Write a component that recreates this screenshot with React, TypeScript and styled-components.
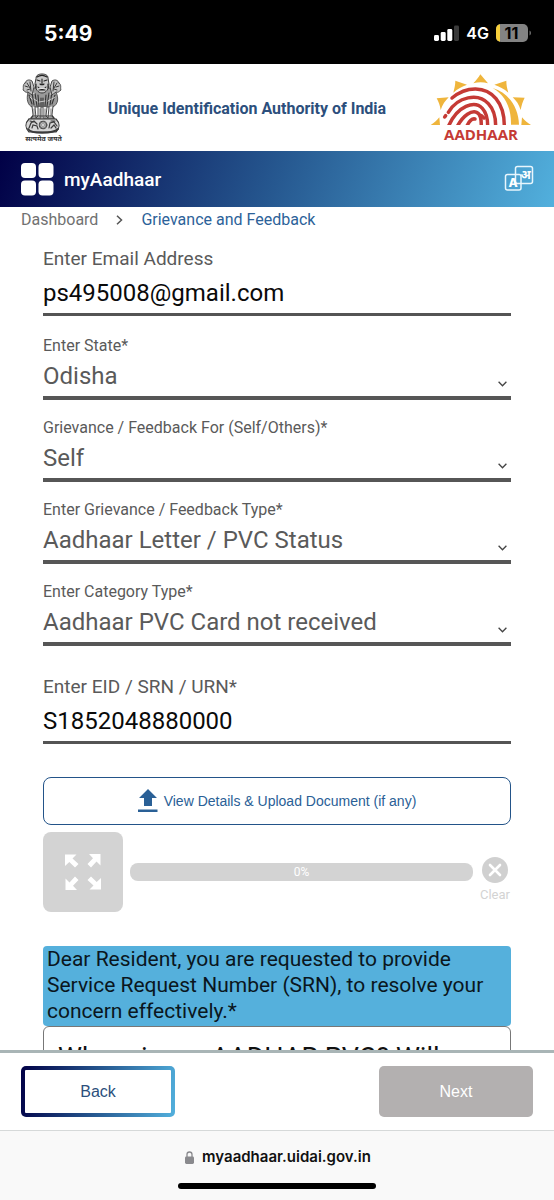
import React from "react";
import styled, { createGlobalStyle } from "styled-components";

const GlobalStyle = createGlobalStyle`
  *, *::before, *::after { box-sizing: border-box; }
  html, body { margin: 0; background: #fff; }
  body { font-family: Roboto, "Noto Sans", sans-serif; }
  button, input, select, textarea { font-family: inherit; }
`;

const Screen = styled.div`
  display: flex;
  flex-direction: column;
  height: 100vh;
  overflow: hidden;
`;

const StatusBar = styled.div`
  display: flex;
  flex-shrink: 0;
  align-items: center;
  justify-content: space-between;
  height: 64px;
  padding: 2px 22px 0 44px;
  background: #000;
  color: #fff;
  font-family: Inter, sans-serif;
`;

const Clock = styled.span`
  font-size: 21px;
  font-weight: 700;
`;

const Indicators = styled.div`
  display: flex;
  align-items: center;
  gap: 7px;
  font-size: 16px;
  font-weight: 600;
`;

const BrandBar = styled.header`
  display: flex;
  flex-shrink: 0;
  align-items: center;
  justify-content: space-between;
  height: 87px;
  padding: 1px 22px 0 21px;
`;

const BrandTitle = styled.h1`
  margin: 0;
  color: #2c4f7c;
  font-size: 16px;
  font-weight: 700;
`;

const NavBar = styled.nav`
  display: flex;
  flex-shrink: 0;
  align-items: center;
  gap: 10px;
  height: 56px;
  padding: 0 20px;
  background: linear-gradient(110deg, #010046 0%, #265890 50%, #52b0dd 100%);
  color: #fff;
`;

const NavTitle = styled.span`
  flex: 1;
  font-size: 19px;
  font-weight: 500;
`;

const IconButton = styled.button`
  display: flex;
  padding: 0;
  border: 0;
  background: none;
  color: inherit;
`;

const Content = styled.main`
  flex: 1;
  min-height: 0;
  overflow: hidden;
`;

const Breadcrumb = styled.div`
  display: flex;
  align-items: center;
  gap: 18px;
  height: 26px;
  padding: 0 21px;
  color: #717171;
  font-size: 16px;
  line-height: 26px;
`;

const Crumb = styled.a<{ $current?: boolean }>`
  color: ${(p) => (p.$current ? "#2c6299" : "#717171")};
  text-decoration: none;
`;

const Form = styled.form`
  display: flex;
  flex-direction: column;
  padding: 14px 43px 0;
`;

const Field = styled.div`
  display: flex;
  flex-direction: column;
`;

const TextLabel = styled.label`
  color: #5a5a5a;
  font-size: 19px;
  line-height: 24px;
`;

const TextInput = styled.input`
  width: 100%;
  height: 45px;
  padding: 1px 0 0;
  border: 0;
  border-bottom: 3px solid #545454;
  border-radius: 0;
  outline: 0;
  background: none;
  color: #0a0a0a;
  font-size: 24px;
`;

const SelectGroup = styled.div`
  display: flex;
  flex-direction: column;
  gap: 18px;
  padding: 20px 0 29px;
`;

const SelectLabel = styled.label`
  color: #5a5a5a;
  font-size: 16px;
  line-height: 20px;
`;

const SelectBox = styled.div`
  display: flex;
  align-items: flex-end;
  border-bottom: 4px solid #565656;
`;

const Select = styled.select`
  flex: 1;
  min-width: 0;
  height: 40px;
  padding: 0;
  border: 0;
  outline: 0;
  appearance: none;
  background: none;
  color: #5a5a5a;
  font-size: 24px;
`;

const Chevron = styled.svg`
  margin: 0 4px 9px 0;
`;

const UploadButton = styled.button`
  display: flex;
  align-items: center;
  justify-content: center;
  gap: 6px;
  height: 48px;
  margin-top: 33px;
  border: 1px solid #235489;
  border-radius: 8px;
  background: #fff;
  color: #2a6096;
  font-family: "Liberation Sans", sans-serif;
  font-size: 14px;
`;

const UploadRow = styled.div`
  display: flex;
  align-items: center;
  gap: 7px;
  margin-top: 7px;
`;

const Thumbnail = styled.button`
  display: flex;
  align-items: center;
  justify-content: center;
  width: 80px;
  height: 80px;
  padding: 0;
  border: 0;
  border-radius: 8px;
  background: #d3d3d3;
`;

const Progress = styled.div`
  flex: 1;
  height: 18px;
  border-radius: 8px;
  background: #d3d3d3;
  color: #fff;
  font-size: 12px;
  line-height: 18px;
  text-align: center;
`;

const ClearButton = styled.button`
  display: flex;
  flex-direction: column;
  align-items: center;
  gap: 4px;
  padding: 16px 1px 0 0;
  border: 0;
  background: none;
  color: #d3d3d3;
  font-size: 13px;
  line-height: 16px;
`;

const Notice = styled.label`
  margin-top: 34px;
  padding: 0 4px 2px;
  border-radius: 4px;
  background: #55b0dc;
  color: #0a1620;
  font-size: 21px;
  line-height: 26px;
`;

const Message = styled.textarea`
  height: 160px;
  padding: 16px 14px;
  overflow: hidden;
  border: 1px solid #777;
  border-radius: 6px;
  outline: 0;
  resize: none;
  background: #fff;
  color: #111;
  font-size: 27px;
  line-height: 30px;
`;

const ActionBar = styled.div`
  display: flex;
  flex-shrink: 0;
  align-items: center;
  justify-content: space-between;
  height: 80px;
  padding: 0 21px;
  border-top: 3px solid #a9b5b6;
  background: #fff;
`;

const ActionButton = styled.button<{ $primary?: boolean }>`
  width: 154px;
  height: 51px;
  border: 4px solid transparent;
  border-radius: 5px;
  background: ${(p) =>
    p.$primary
      ? "#b3b0b0 border-box"
      : "linear-gradient(#fff, #fff) padding-box, linear-gradient(100deg, #010046, #265890 50%, #52b0dd) border-box"};
  color: ${(p) => (p.$primary ? "#fff" : "#2c4f7c")};
  font-family: "Liberation Sans", sans-serif;
  font-size: 16px;
`;

const BrowserBar = styled.footer`
  display: flex;
  flex-shrink: 0;
  flex-direction: column;
  align-items: center;
  justify-content: space-between;
  height: 70px;
  padding: 16px 0 11px;
  border-top: 1px solid #d6d9d9;
  background: #f9f9f9;
`;

const Address = styled.div`
  display: flex;
  align-items: center;
  gap: 8px;
  padding-left: 2px;
  color: #111;
  font-family: Inter, sans-serif;
  font-size: 15px;
  font-weight: 600;
  line-height: 20px;
`;

const HomeIndicator = styled.div`
  width: 198px;
  height: 6px;
  border-radius: 3px;
  background: #000;
`;

const Signal = () => (
  <svg width="25" height="16" viewBox="0 0 25 16" fill="#fff" aria-hidden="true">
    <rect x="0" y="10" width="5" height="6" rx="1.4" />
    <rect x="6.7" y="7" width="5" height="9" rx="1.4" />
    <rect x="13.3" y="4" width="5" height="12" rx="1.4" />
    <rect x="20" y="0.500" width="5" height="15.500" rx="1.4" fill="#3a3a3a" />
  </svg>
);

const Battery = () => (
  <svg width="36" height="18" viewBox="0 0 36 18" aria-label="Battery 11 percent">
    <rect width="32" height="18" rx="5" fill="#838383" />
    <path d="M4 0.300A5 5 0 0 0 0 5v8a5 5 0 0 0 4 4.700z" fill="#f7cf3b" />
    <path d="M33.500 6.500c2 .7 2 4.300 0 5z" fill="#6a6a6a" />
    <text x="15.500" y="14.500" textAnchor="middle" fontFamily="Inter, sans-serif" fontSize="16" fontWeight="700" fill="#000">
      11
    </text>
  </svg>
);

const Emblem = () => (
  <svg width="43" height="70" viewBox="21 73 43 70" fill="none" stroke="#3a3a3a" strokeLinecap="round" role="img" aria-label="Emblem of India">
    <path d="M28 92c-2 8 0 13 4 15h21c5-3 6-8 3-15-5-4-8-5-14-5s-10 1-14 5z" fill="#999" strokeWidth=".8" />
    <path d="M29 95l3 9M32 92l2 13M35 93l2 13M38 95l1 11M46 95l-1 11M49 93l-2 13M52 92l-2 13M55 95l-3 9M41 98v8M43 98v8" strokeWidth="1.100" stroke="#333" />
    <path d="M30 97l2 2M34 99l3 2M48 101l3-2M52 99l3-2M39 102l6-1M31 94l4-1M50 94l4 0" stroke="#e6e6e6" strokeWidth=".8" />
    <path d="M25 83c-3 2-1 5-2 7 2 1 2 3 5 2l4 3 2-8-2-6c-3-2-6-1-7 2zM59 83c3 2 1 5 2 7-2 1-2 3-5 2l-4 3-2-8 2-6c3-2 6-1 7 2z" fill="#c2c2c2" strokeWidth=".9" />
    <path d="M25 86l3 1M27 83l3 5M30 82l1 9M27 90l3-1M59 86l-3 1M57 83l-3 5M54 82l-1 9M57 90l-3-1" strokeWidth=".9" stroke="#2a2a2a" />
    <path d="M36 78c0-3 3-4 6-4s6 1 6 4l1 6c0 5-3 9-7 9s-7-4-7-9z" fill="#c8c8c8" strokeWidth="1" />
    <path d="M37 77c3-2 7-2 10 0M37 80l3 1M47 80l-3 1M42 79v5M40 84c1 1 3 1 4 0M38 87c2 3 6 3 8 0M36 84v4M48 84v4M39 90h6" strokeWidth="1.100" stroke="#222" />
    <path d="M39 88.500h6" stroke="#fff" strokeWidth=".8" />
    <path d="M32 106l1 9-2 3h5l-1-11M38 107v9l-2 2h5v-11M43 107v11h5l-2-2 1-9M49 107l-1 11h6l-2-3 1-9" fill="#f0f0f0" strokeWidth=".9" />
    <path d="M34 109v7M40 109v8M45 109v8M51 109v7" strokeWidth=".6" />
    <path d="M29 119h26M31 118l2-2h19l2 2" strokeWidth="1.200" />
    <path d="M29 119c-4 4-4 9 0 13h27c4-4 4-9 0-13z" fill="#d6d6d6" strokeWidth="1.200" />
    <path d="M28 129c3 5 25 5 30 0" strokeWidth="1.800" />
    <circle cx="43" cy="125" r="3.800" fill="#888" strokeWidth="1" />
    <path d="M43 122v6M40 125h6M41 123l4 4M45 123l-4 4" strokeWidth=".5" stroke="#eee" />
    <path d="M29 128l2-5 3-2 3 3M32 128l1-3 4 1 1 3M49 128l1-5 4-1 3 4M51 128l3-3 2 3M30 121l4 1M51 121l4 0" strokeWidth="1.200" />
    <text x="43.500" y="141" textAnchor="middle" fontFamily="Noto Sans Devanagari, Noto Sans, sans-serif" fontSize="7" fontWeight="700" fill="#333" stroke="none">
      सत्यमेव जयते
    </text>
  </svg>
);

const AadhaarLogo = () => (
  <svg width="102" height="70" viewBox="462 222 306 210" fill="none" role="img" aria-label="Aadhaar">
    <g fill="#efb53c">
      <path d="M613 226L636 253C621 249 607 249 592 253C601 244 607 236 613 226z" />
      <path d="M538 245L573 257C558 262 545 269 532 281C535 268 538 257 538 245z" />
      <path d="M691 245L655 257C670 262 684 269 697 281C693 268 691 257 691 245z" />
      <path d="M482 298L518 295C508 305 499 317 494 333C492 320 488 309 482 298z" />
      <path d="M746 296L710 295C721 305 729 317 734 333C736 320 740 308 746 296z" />
      <path d="M464 378C475 372 482 365 490 355L492 378z" />
      <path d="M765 378C754 372 746 365 738 355L736 378z" />
      <path d="M650 267C700 282 728 328 729 377H705C706 330 690 290 650 267z" />
    </g>
    <g stroke="#c53a35" strokeWidth="10.500" strokeLinecap="round">
      <path d="M528 297C572 260 629 261 660 299C679 322 685 348 685 380" />
      <path d="M517 340C545 292 607 281 637 314C654 332 659 352 659 380" />
      <path d="M506 354L509 350" />
      <path d="M518 380C545 320 596 303 619 328C632 342 635 357 635 380" />
      <path d="M545 380C563 348 586 334 602 340C614 345 616 358 616 380" />
      <path d="M573 380C581 364 589 358 597 360" />
      <path d="M616 350L624 357" />
    </g>
    <rect x="500" y="378" width="235" height="12" fill="#fff" />
    <text x="615" y="422" textAnchor="middle" fontFamily="Open Sans, sans-serif" fontSize="45" fontWeight="700" fill="#c53a35">
      AADHAAR
    </text>
  </svg>
);

const GridIcon = () => (
  <svg width="34" height="34" viewBox="0 0 34 34" fill="#fff" aria-hidden="true">
    <rect x="1" y="1" width="15" height="15" rx="4" />
    <rect x="18.500" y="1" width="15" height="15" rx="4" />
    <rect x="1" y="18.500" width="15" height="15" rx="4" />
    <rect x="18.500" y="18.500" width="15" height="15" rx="4" />
  </svg>
);

const LanguageIcon = () => (
  <svg width="30" height="28" viewBox="0 0 30 28" fill="none" stroke="#e8f6fd" strokeWidth="1.500" aria-hidden="true">
    <rect x="11.500" y="1.500" width="17" height="17" rx="2" />
    <rect x="1.500" y="9.500" width="15.500" height="15.500" rx="2" />
    <text x="9" y="22" textAnchor="middle" fontFamily="Inter, sans-serif" fontSize="12" fontWeight="800" fill="#fff" stroke="none">
      A
    </text>
    <text x="21.500" y="14" textAnchor="middle" fontFamily="Noto Sans Devanagari, Noto Sans, sans-serif" fontSize="12" fontWeight="700" fill="#fff" stroke="none">
      अ
    </text>
  </svg>
);

const UploadIcon = () => (
  <svg width="20" height="24" viewBox="0 0 20 24" fill="#2a6096" aria-hidden="true">
    <path d="M10 0l9 9h-5v8H6V9H1zM0 20.500h19.500v2.500H0z" />
  </svg>
);

const ExpandIcon = () => (
  <svg width="36" height="36" viewBox="0 0 36 36" fill="#fff" aria-hidden="true">
    {[0, 90, 180, 270].map((turn) => (
      <path key={turn} transform={`rotate(${turn} 18 18)`} d="M0 0.500h11.500l-4 4 6 5.500-3.500 3.500L4.300 8 0 12z" />
    ))}
  </svg>
);

const ClearIcon = () => (
  <svg width="26" height="26" viewBox="0 0 26 26" aria-hidden="true">
    <circle cx="13" cy="13" r="13" fill="#d0d0d0" />
    <path d="M8 8l10 10M18 8L8 18" stroke="#fff" strokeWidth="2.600" strokeLinecap="round" />
  </svg>
);

const LockIcon = () => (
  <svg width="9" height="13" viewBox="0 0 9 13" aria-hidden="true">
    <path d="M2 6V3.500a2.500 2.500 0 0 1 5 0V6" fill="none" stroke="#8a8a8e" strokeWidth="1.300" />
    <rect y="5.500" width="9" height="7.500" rx="1.400" fill="#8a8a8e" />
  </svg>
);

const selects = [
  { id: "state", label: "Enter State*", value: "Odisha" },
  { id: "for", label: "Grievance / Feedback For (Self/Others)*", value: "Self" },
  { id: "type", label: "Enter Grievance / Feedback Type*", value: "Aadhaar Letter / PVC Status" },
  { id: "category", label: "Enter Category Type*", value: "Aadhaar PVC Card not received" },
];

export default function App() {
  return (
    <Screen>
      <GlobalStyle />
      <StatusBar>
        <Clock>5:49</Clock>
        <Indicators>
          <Signal />
          <span>4G</span>
          <Battery />
        </Indicators>
      </StatusBar>
      <BrandBar>
        <Emblem />
        <BrandTitle>Unique Identification Authority of India</BrandTitle>
        <AadhaarLogo />
      </BrandBar>
      <NavBar>
        <IconButton type="button" aria-label="Menu">
          <GridIcon />
        </IconButton>
        <NavTitle>myAadhaar</NavTitle>
        <IconButton type="button" aria-label="Change language">
          <LanguageIcon />
        </IconButton>
      </NavBar>
      <Content>
        <Breadcrumb>
          <Crumb href="#dashboard">Dashboard</Crumb>
          <svg width="7" height="10" viewBox="0 0 7 10" fill="none" stroke="#555" strokeWidth="1.500" aria-hidden="true">
            <path d="M1 0.800L5.500 5 1 9.200" />
          </svg>
          <Crumb href="#grievance" $current>
            Grievance and Feedback
          </Crumb>
        </Breadcrumb>
        <Form>
          <Field>
            <TextLabel htmlFor="email">Enter Email Address</TextLabel>
            <TextInput id="email" type="email" defaultValue="ps495008@gmail.com" />
          </Field>
          <SelectGroup>
            {selects.map((s) => (
              <Field key={s.id}>
                <SelectLabel htmlFor={s.id}>{s.label}</SelectLabel>
                <SelectBox>
                  <Select id={s.id} defaultValue={s.value}>
                    <option>{s.value}</option>
                  </Select>
                  <Chevron width="9" height="6" viewBox="0 0 9 6" fill="none" stroke="#444" strokeWidth="1.300" aria-hidden="true">
                    <path d="M0.600 0.800L4.500 4.800 8.400 0.800" />
                  </Chevron>
                </SelectBox>
              </Field>
            ))}
          </SelectGroup>
          <Field>
            <TextLabel htmlFor="srn">Enter EID / SRN / URN*</TextLabel>
            <TextInput id="srn" type="text" defaultValue="S1852048880000" />
          </Field>
          <UploadButton type="button">
            <UploadIcon />
            View Details &amp; Upload Document (if any)
          </UploadButton>
          <UploadRow>
            <Thumbnail type="button" aria-label="Expand preview">
              <ExpandIcon />
            </Thumbnail>
            <Progress role="progressbar" aria-valuenow={0}>
              0%
            </Progress>
            <ClearButton type="button">
              <ClearIcon />
              Clear
            </ClearButton>
          </UploadRow>
          <Notice htmlFor="message">
            Dear Resident, you are requested to provide Service Request Number (SRN), to resolve your concern
            effectively.*
          </Notice>
          <Message id="message" defaultValue="Where is my AADHAR PVC? Will" />
        </Form>
      </Content>
      <ActionBar>
        <ActionButton type="button">Back</ActionButton>
        <ActionButton type="button" $primary>
          Next
        </ActionButton>
      </ActionBar>
      <BrowserBar>
        <Address>
          <LockIcon />
          myaadhaar.uidai.gov.in
        </Address>
        <HomeIndicator />
      </BrowserBar>
    </Screen>
  );
}
